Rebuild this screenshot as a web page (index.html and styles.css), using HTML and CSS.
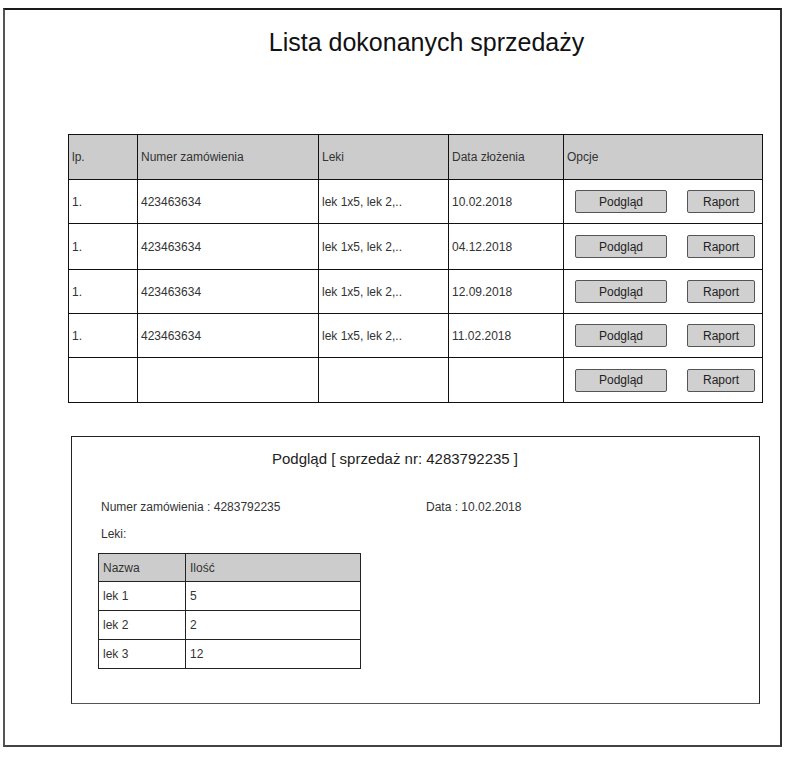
FILE: index.html
```html
<!DOCTYPE html>
<html lang="pl">
<head>
<meta charset="utf-8">
<title>Lista dokonanych sprzedaży</title>
<link rel="stylesheet" href="styles.css">
</head>
<body>
<div class="frame">
  <h1 class="title">Lista dokonanych sprzedaży</h1>

  <table class="sales">
    <colgroup>
      <col class="c-lp"><col class="c-num"><col class="c-leki"><col class="c-date"><col class="c-opt">
    </colgroup>
    <thead>
      <tr class="r-head"><th>lp.</th><th>Numer zamówienia</th><th>Leki</th><th>Data złożenia</th><th>Opcje</th></tr>
    </thead>
    <tbody>
      <tr class="r-a"><td>1.</td><td>423463634</td><td>lek 1x5, lek 2,..</td><td>10.02.2018</td>
        <td class="opts"><div class="btns"><span class="btn btn-podglad">Podgląd</span><span class="btn btn-raport">Raport</span></div></td></tr>
      <tr class="r-b"><td>1.</td><td>423463634</td><td>lek 1x5, lek 2,..</td><td>04.12.2018</td>
        <td class="opts"><div class="btns"><span class="btn btn-podglad">Podgląd</span><span class="btn btn-raport">Raport</span></div></td></tr>
      <tr class="r-c"><td>1.</td><td>423463634</td><td>lek 1x5, lek 2,..</td><td>12.09.2018</td>
        <td class="opts"><div class="btns"><span class="btn btn-podglad">Podgląd</span><span class="btn btn-raport">Raport</span></div></td></tr>
      <tr class="r-a"><td>1.</td><td>423463634</td><td>lek 1x5, lek 2,..</td><td>11.02.2018</td>
        <td class="opts"><div class="btns"><span class="btn btn-podglad">Podgląd</span><span class="btn btn-raport">Raport</span></div></td></tr>
      <tr class="r-d"><td></td><td></td><td></td><td></td>
        <td class="opts"><div class="btns"><span class="btn btn-podglad">Podgląd</span><span class="btn btn-raport">Raport</span></div></td></tr>
    </tbody>
  </table>

  <section class="panel">
    <h2 class="panel-title">Podgląd [ sprzedaż nr: 4283792235 ]</h2>
    <div class="info">
      <span class="info-num">Numer zamówienia : 4283792235</span>
      <span class="info-date">Data : 10.02.2018</span>
    </div>
    <div class="leki">Leki:</div>
    <table class="items">
      <colgroup><col class="c-name"><col class="c-qty"></colgroup>
      <thead><tr><th>Nazwa</th><th>Ilość</th></tr></thead>
      <tbody>
        <tr><td>lek 1</td><td>5</td></tr>
        <tr><td>lek 2</td><td>2</td></tr>
        <tr><td>lek 3</td><td>12</td></tr>
      </tbody>
    </table>
  </section>
</div>
</body>
</html>
```

FILE: styles.css
```css
html, body {
  margin: 0;
  padding: 0;
  background: #fff;
}
body {
  font-family: "Liberation Sans", Arial, sans-serif;
  color: #222;
}
.frame {
  box-sizing: border-box;
  margin: 8px 0 0 3px;
  width: 779px;
  height: 739px;
  border: 2px solid #1a1a1a;
  border-left-color: #555;
  border-right-color: #333;
  border-bottom-color: #444;
  padding-top: 17px;
}
.title {
  margin: 0;
  font-size: 25px;
  font-weight: normal;
  line-height: 30px;
  height: 30px;
  text-align: center;
  padding-left: 68px;
  color: #111;
}
.sales {
  margin: 77px 0 0 63px;
  border-collapse: collapse;
  table-layout: fixed;
  width: 694px;
  font-size: 12px;
}
.sales th, .sales td {
  border: 1px solid #111;
  padding: 0 0 0 3px;
  text-align: left;
  font-weight: normal;
  vertical-align: middle;
  color: #333;
  white-space: nowrap;
  overflow: hidden;
}
.sales th {
  background: #cccccc;
}
.c-lp { width: 69px; }
.c-num { width: 181px; }
.c-leki { width: 130px; }
.c-date { width: 115px; }
.c-opt { width: 199px; }
.r-head th { height: 44px; }
.r-a td { height: 43px; }
.r-b td { height: 45px; }
.r-c td { height: 43px; }
.r-d td { height: 44px; }
.sales td.opts {
  padding: 0;
}
.btns {
  display: flex;
  align-items: center;
  gap: 20px;
  padding-left: 11px;
}
.btn {
  box-sizing: border-box;
  display: flex;
  align-items: center;
  justify-content: center;
  height: 23px;
  background: #d0d0d0;
  border: 1px solid #555;
  border-radius: 2px;
  font-size: 12px;
  color: #222;
}
.btn-podglad { width: 92px; }
.btn-raport { width: 68px; }

.panel {
  box-sizing: border-box;
  margin: 33px 0 0 66px;
  width: 689px;
  height: 268px;
  border: 1px solid #222;
  border-bottom-color: #555;
  padding-top: 12px;
}
.panel-title {
  margin: 0;
  font-size: 15px;
  font-weight: normal;
  line-height: 20px;
  padding-left: 200px;
  color: #222;
}
.info {
  display: flex;
  margin-top: 30px;
  padding-left: 29px;
  font-size: 12px;
  line-height: 16px;
  color: #333;
}
.info-num { width: 325px; }
.leki {
  margin-top: 11px;
  padding-left: 29px;
  font-size: 12px;
  line-height: 16px;
  color: #333;
}
.items {
  margin: 11px 0 0 26px;
  border-collapse: collapse;
  table-layout: fixed;
  width: 262px;
  font-size: 12px;
}
.items th, .items td {
  border: 1px solid #222;
  padding: 0 0 0 4px;
  height: 28px;
  text-align: left;
  font-weight: normal;
  color: #333;
  vertical-align: middle;
}
.items th { background: #cccccc; height: 27px; }
.c-name { width: 87px; }
.c-qty { width: 175px; }
```
